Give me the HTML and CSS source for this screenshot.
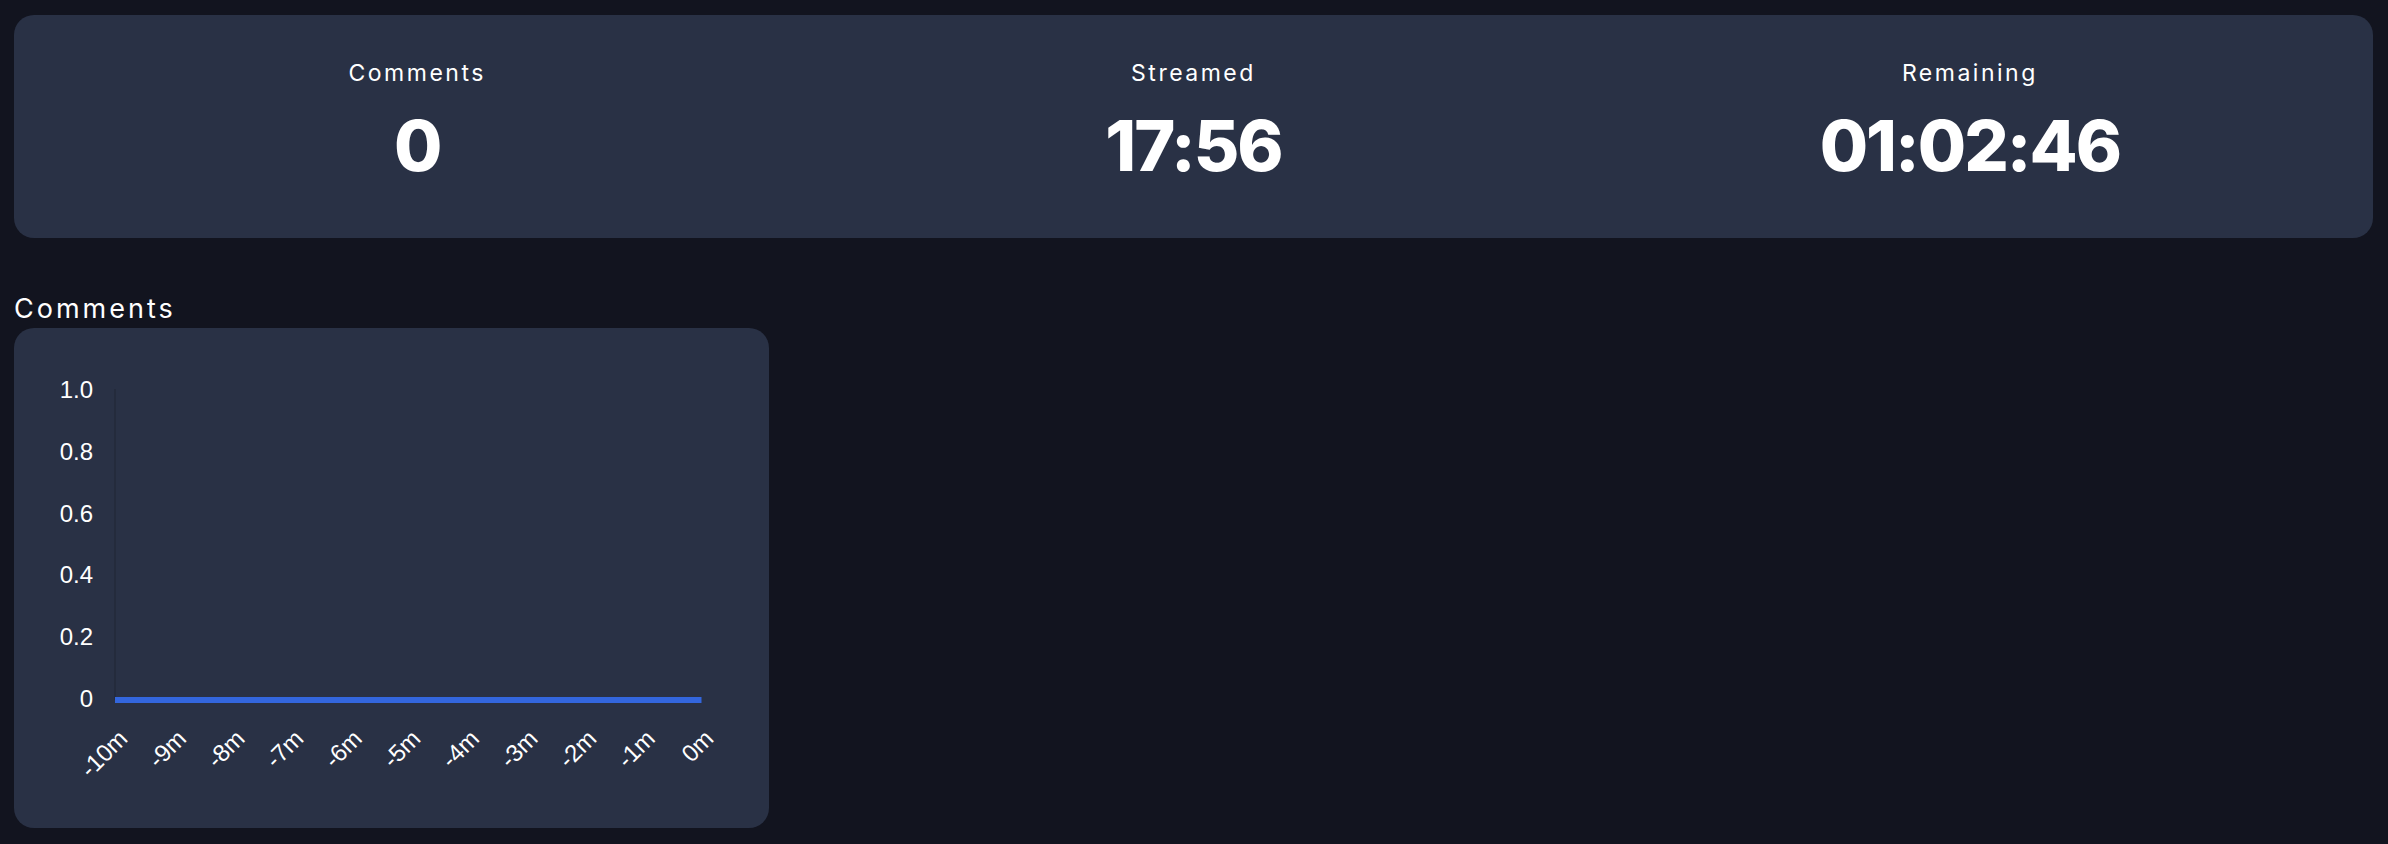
FILE: index.html
```html
<!DOCTYPE html>
<html lang="en">
<head>
    <meta charset="UTF-8">
    <meta name="viewport" content="width=device-width, initial-scale=1.0">
    <title>Stream Stats</title>
    <link rel="stylesheet" href="styles.css">
</head>
<body>
    <div class="stats-card">
        <div class="stat">
            <div class="stat-label">Comments</div>
            <div class="stat-value">0</div>
        </div>
        <div class="stat">
            <div class="stat-label">Streamed</div>
            <div class="stat-value">17:56</div>
        </div>
        <div class="stat">
            <div class="stat-label">Remaining</div>
            <div class="stat-value">01:02:46</div>
        </div>
    </div>

    <h2 class="section-title">Comments</h2>
    <div class="chart-card">
        <svg class="chart" width="755" height="500" viewBox="0 0 755 500">
            <line class="y-axis" x1="101" y1="61" x2="101" y2="372"></line>
            <g class="y-labels">
                <text x="79" y="70">1.0</text>
                <text x="79" y="131.8">0.8</text>
                <text x="79" y="193.6">0.6</text>
                <text x="79" y="255.4">0.4</text>
                <text x="79" y="317.2">0.2</text>
                <text x="79" y="379">0</text>
            </g>
            <line class="data-line" x1="101" y1="372" x2="687.5" y2="372"></line>
            <g class="x-labels">
                <text transform="translate(115 412) rotate(-45)">-10m</text>
                <text transform="translate(173.6 412) rotate(-45)">-9m</text>
                <text transform="translate(232.2 412) rotate(-45)">-8m</text>
                <text transform="translate(290.8 412) rotate(-45)">-7m</text>
                <text transform="translate(349.4 412) rotate(-45)">-6m</text>
                <text transform="translate(408 412) rotate(-45)">-5m</text>
                <text transform="translate(466.6 412) rotate(-45)">-4m</text>
                <text transform="translate(525.2 412) rotate(-45)">-3m</text>
                <text transform="translate(583.8 412) rotate(-45)">-2m</text>
                <text transform="translate(642.4 412) rotate(-45)">-1m</text>
                <text transform="translate(701 412) rotate(-45)">0m</text>
            </g>
        </svg>
    </div>
</body>
</html>
```

FILE: styles.css
```css
body {
    margin: 0;
    padding: 15px 15px 15px 14px;
    background-color: #12141f;
    color: white;
    font-family: Inter, "Noto Sans", sans-serif;
}
.stats-card {
    display: grid;
    grid-template-columns: repeat(3, 1fr);
    padding: 43px 15px 52px 15px;
    background: #293145;
    border-radius: 20px;
}
.stat {
    text-align: center;
}
.stat-label {
    font-size: 23px;
    line-height: 30px;
    letter-spacing: 2.5px;
}
.stat-value {
    margin-top: 18px;
    font-size: 70px;
    line-height: 80px;
    font-weight: 800;
    letter-spacing: -2px;
}
.section-title {
    margin: 55px 0 3px 0;
    font-size: 27px;
    line-height: 32px;
    font-weight: 400;
    letter-spacing: 3px;
}
.chart-card {
    width: 755px;
    height: 500px;
    background: #293145;
    border-radius: 20px;
}
.chart {
    display: block;
}
.y-axis {
    stroke: rgba(0, 0, 0, 0.12);
    stroke-width: 2;
}
.data-line {
    stroke: #3366dd;
    stroke-width: 6;
}
.y-labels text,
.x-labels text {
    font-family: "Liberation Sans", Arial, sans-serif;
    font-size: 24px;
    fill: white;
    text-anchor: end;
}
```
